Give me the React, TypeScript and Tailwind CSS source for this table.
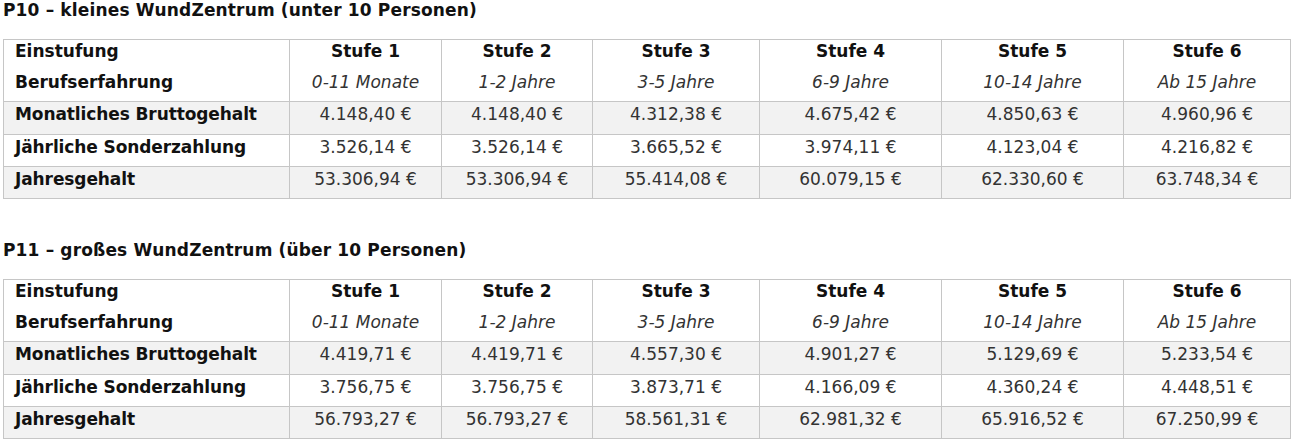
const widths = ['w-[286px]', 'w-[152px]', 'w-[151px]', 'w-[167px]', 'w-[182px]', 'w-[182px]', 'w-[167px]'];

const experience = ['0-11 Monate', '1-2 Jahre', '3-5 Jahre', '6-9 Jahre', '10-14 Jahre', 'Ab 15 Jahre'];

const tables = [
  {
    title: 'P10 – kleines WundZentrum (unter 10 Personen)',
    rows: [
      { label: 'Monatliches Bruttogehalt', values: ['4.148,40 €', '4.148,40 €', '4.312,38 €', '4.675,42 €', '4.850,63 €', '4.960,96 €'] },
      { label: 'Jährliche Sonderzahlung', values: ['3.526,14 €', '3.526,14 €', '3.665,52 €', '3.974,11 €', '4.123,04 €', '4.216,82 €'] },
      { label: 'Jahresgehalt', values: ['53.306,94 €', '53.306,94 €', '55.414,08 €', '60.079,15 €', '62.330,60 €', '63.748,34 €'] },
    ],
  },
  {
    title: 'P11 – großes WundZentrum (über 10 Personen)',
    rows: [
      { label: 'Monatliches Bruttogehalt', values: ['4.419,71 €', '4.419,71 €', '4.557,30 €', '4.901,27 €', '5.129,69 €', '5.233,54 €'] },
      { label: 'Jährliche Sonderzahlung', values: ['3.756,75 €', '3.756,75 €', '3.873,71 €', '4.166,09 €', '4.360,24 €', '4.448,51 €'] },
      { label: 'Jahresgehalt', values: ['56.793,27 €', '56.793,27 €', '58.561,31 €', '62.981,32 €', '65.916,52 €', '67.250,99 €'] },
    ],
  },
];

const rowStyles = ['bg-[#f2f2f2] h-[33px]', 'bg-white h-[32px]', 'bg-[#f2f2f2] h-[32px]'];

const SalaryTable = ({ title, rows }: (typeof tables)[number]) => (
  <section>
    <h3 className="text-[17px] leading-[20px] font-bold tracking-[0.15px] text-[#111] mb-[19px]">{title}</h3>
    <table className="table-fixed border-collapse w-[1288px] text-[17px] leading-[20px]">
      <colgroup>
        {widths.map((w, i) => (
          <col key={i} className={w} />
        ))}
      </colgroup>
      <tbody>
        <tr className="h-[62px] bg-white">
          <td className="border border-[#c6c6c6] align-top pl-[11px] pt-[1px] font-bold text-[#111]">
            <p>Einstufung</p>
            <p className="mt-[11px]">Berufserfahrung</p>
          </td>
          {experience.map((exp, i) => (
            <td key={i} className="border border-[#c6c6c6] align-top text-center pt-[1px]">
              <p className="font-bold text-[#111]">Stufe {i + 1}</p>
              <p className="mt-[11px] italic text-[#333]">{exp}</p>
            </td>
          ))}
        </tr>
        {rows.map((row, r) => (
          <tr key={row.label} className={rowStyles[r]}>
            <td className="border border-[#c6c6c6] align-top pl-[11px] pt-[2px] font-bold tracking-[-0.1px] text-[#111]">{row.label}</td>
            {row.values.map((v, i) => (
              <td key={i} className="border border-[#c6c6c6] align-top text-center pt-[2px] text-[#333]">
                {v}
              </td>
            ))}
          </tr>
        ))}
      </tbody>
    </table>
  </section>
);

export default function App() {
  return (
    <div className="w-[1293px] h-[441px] bg-white pl-[3px] pt-0 font-['DejaVu_Sans',_Verdana,_sans-serif] flex flex-col gap-[41px]">
      {tables.map((t) => (
        <SalaryTable key={t.title} {...t} />
      ))}
    </div>
  );
}
